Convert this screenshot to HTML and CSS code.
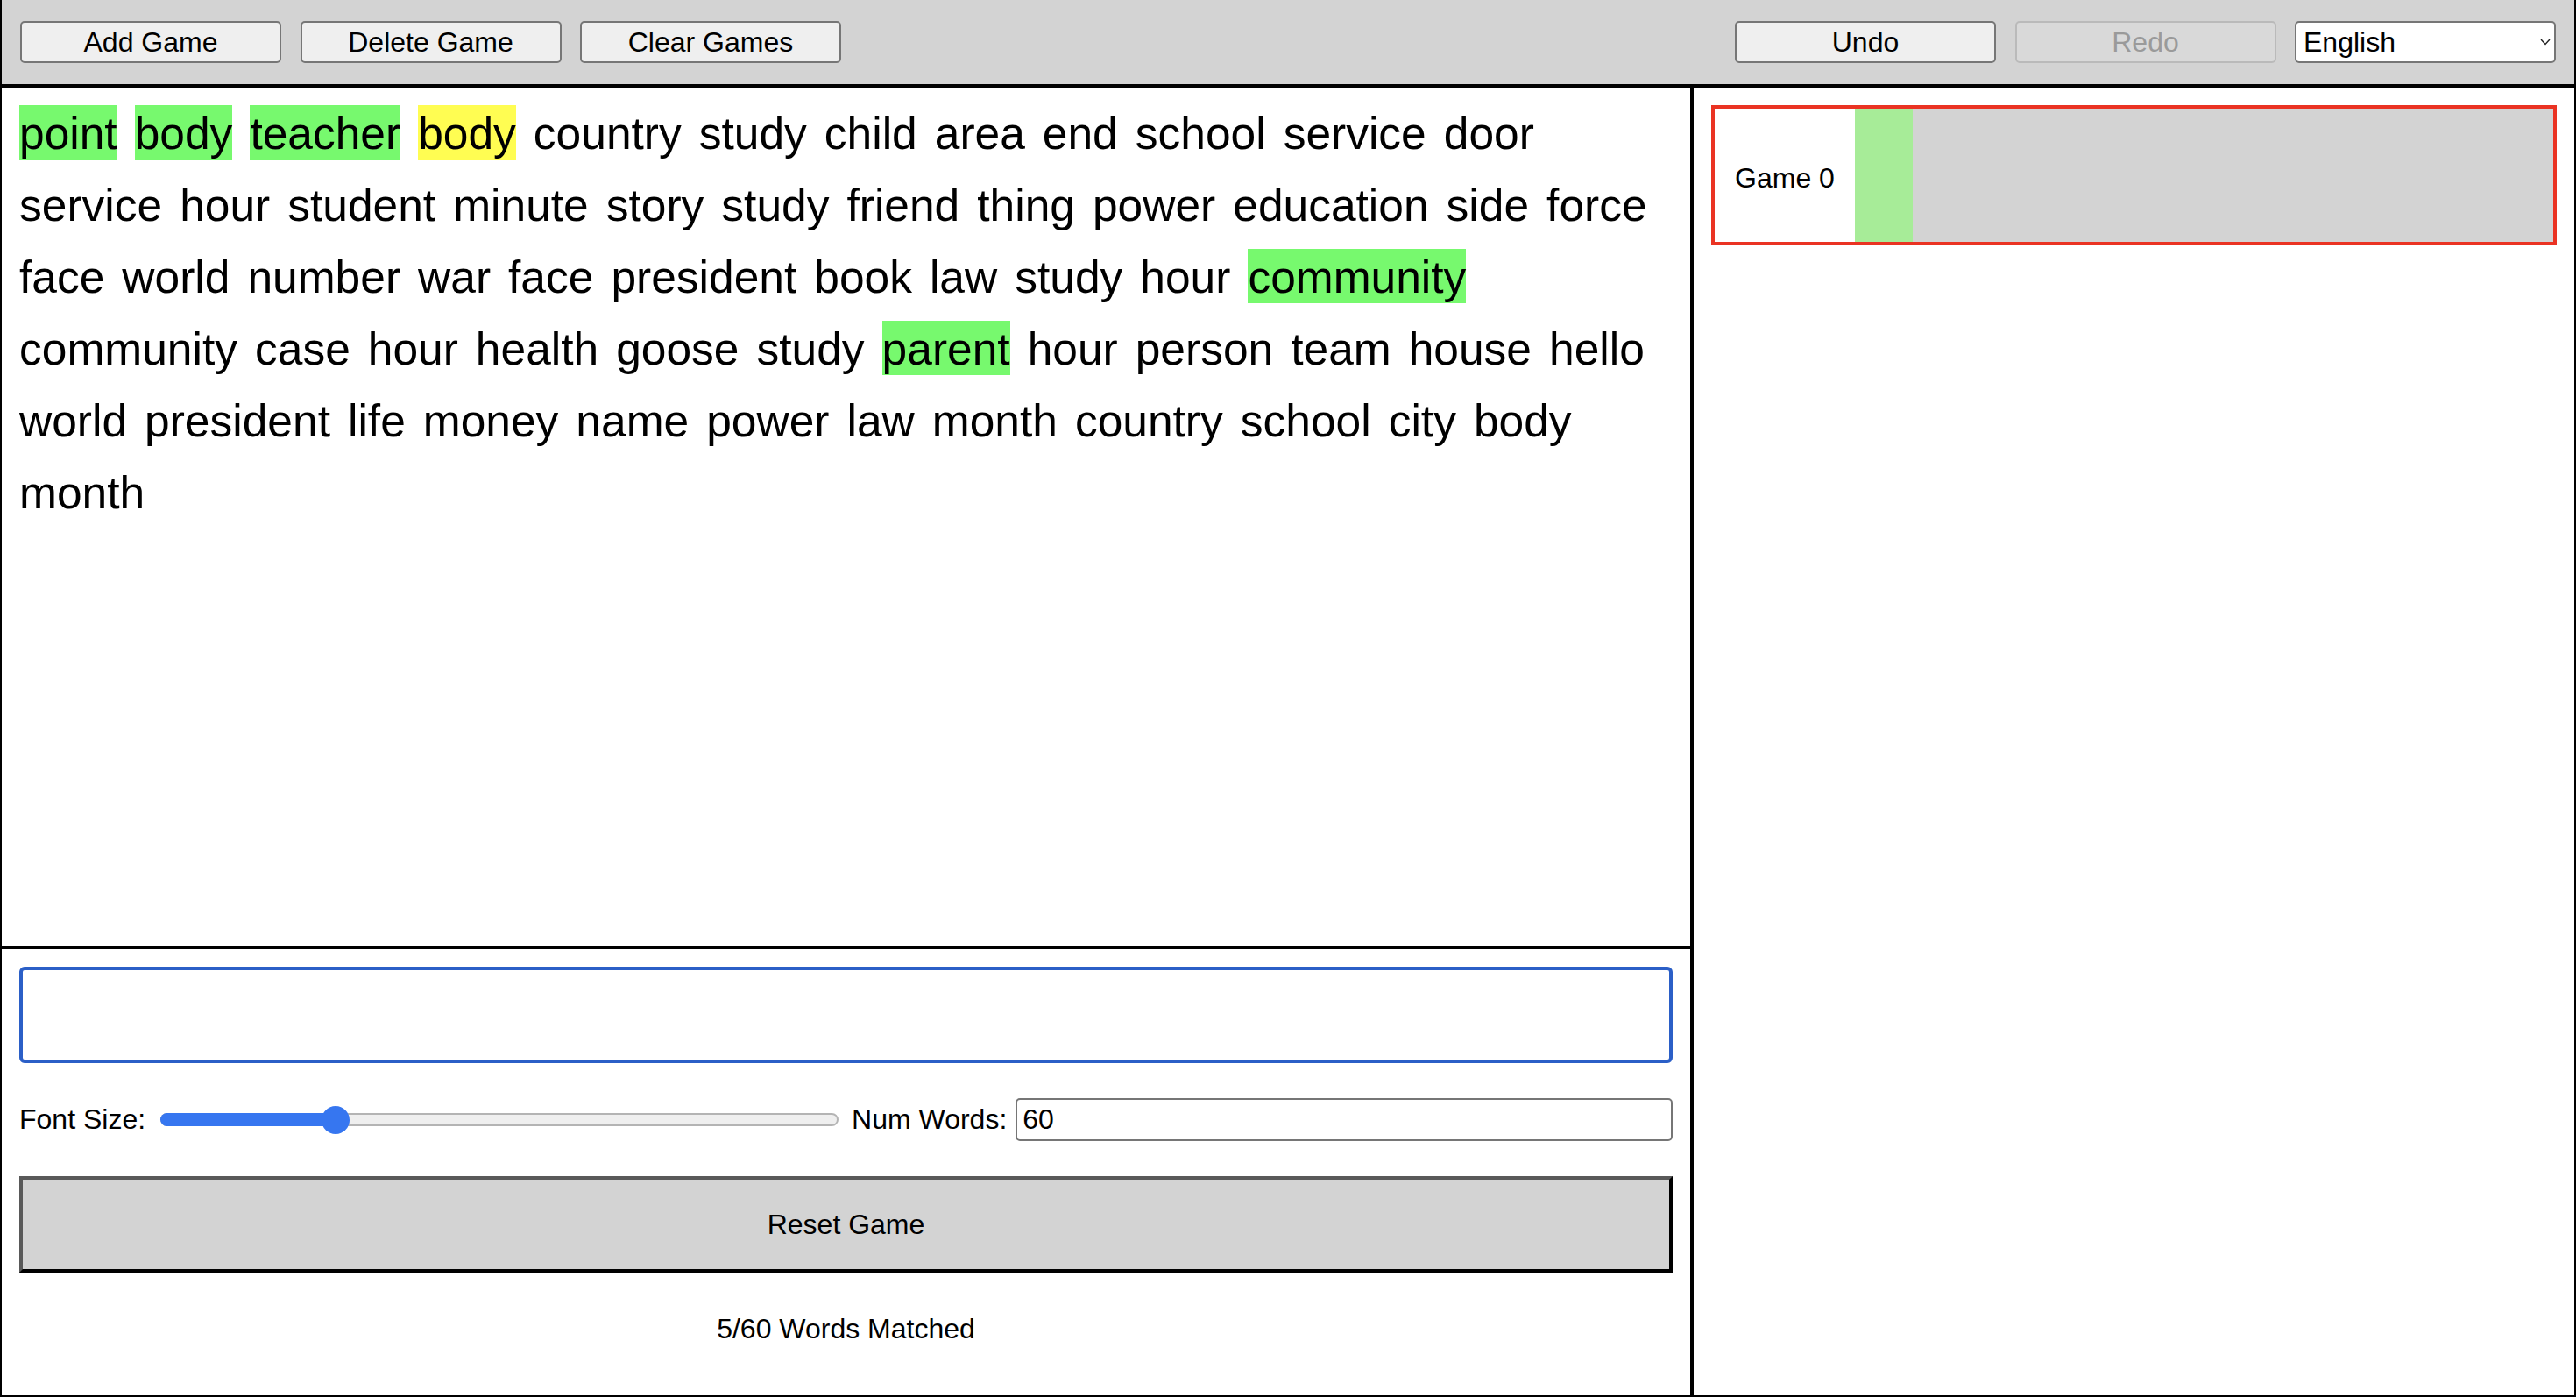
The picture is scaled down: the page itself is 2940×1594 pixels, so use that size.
FILE: index.html
```html
<!DOCTYPE html>
<html lang="en">
<head>
<meta charset="utf-8">
<title>Typing Game</title>
<link rel="stylesheet" href="styles.css">
</head>
<body>
<div class="app">
  <header class="toolbar">
    <div class="toolbar-group">
      <button class="btn">Add Game</button>
      <button class="btn">Delete Game</button>
      <button class="btn">Clear Games</button>
    </div>
    <div class="toolbar-group">
      <button class="btn">Undo</button>
      <button class="btn" disabled>Redo</button>
      <div class="lang">
        <select class="lang-select">
          <option>English</option>
        </select>
        <svg class="lang-caret" width="12" height="8" viewBox="0 0 12 8"><polyline points="1,1 6,6.5 11,1" fill="none" stroke="#222" stroke-width="1.4"/></svg>
      </div>
    </div>
  </header>
  <main class="main">
    <section class="game-panel">
      <div class="words">
        <span class="word matched">point</span>
        <span class="word matched">body</span>
        <span class="word matched">teacher</span>
        <span class="word current">body</span>
        <span class="word">country</span>
        <span class="word">study</span>
        <span class="word">child</span>
        <span class="word">area</span>
        <span class="word">end</span>
        <span class="word">school</span>
        <span class="word">service</span>
        <span class="word">door</span>
        <span class="word">service</span>
        <span class="word">hour</span>
        <span class="word">student</span>
        <span class="word">minute</span>
        <span class="word">story</span>
        <span class="word">study</span>
        <span class="word">friend</span>
        <span class="word">thing</span>
        <span class="word">power</span>
        <span class="word">education</span>
        <span class="word">side</span>
        <span class="word">force</span>
        <span class="word">face</span>
        <span class="word">world</span>
        <span class="word">number</span>
        <span class="word">war</span>
        <span class="word">face</span>
        <span class="word">president</span>
        <span class="word">book</span>
        <span class="word">law</span>
        <span class="word">study</span>
        <span class="word">hour</span>
        <span class="word matched">community</span>
        <span class="word">community</span>
        <span class="word">case</span>
        <span class="word">hour</span>
        <span class="word">health</span>
        <span class="word">goose</span>
        <span class="word">study</span>
        <span class="word matched">parent</span>
        <span class="word">hour</span>
        <span class="word">person</span>
        <span class="word">team</span>
        <span class="word">house</span>
        <span class="word">hello</span>
        <span class="word">world</span>
        <span class="word">president</span>
        <span class="word">life</span>
        <span class="word">money</span>
        <span class="word">name</span>
        <span class="word">power</span>
        <span class="word">law</span>
        <span class="word">month</span>
        <span class="word">country</span>
        <span class="word">school</span>
        <span class="word">city</span>
        <span class="word">body</span>
        <span class="word">month</span>
      </div>
      <div class="controls">
        <input class="typing" type="text" value="">
        <div class="settings">
          <label class="settings-label">Font Size:</label>
          <div class="range">
            <div class="range-fill"></div>
            <div class="range-thumb"></div>
          </div>
          <label class="settings-label settings-label-num">Num Words:</label>
          <input class="num-input" type="text" value="60">
        </div>
        <button class="reset">Reset Game</button>
        <p class="status">5/60 Words Matched</p>
      </div>
    </section>
    <aside class="games">
      <div class="game-card">
        <div class="game-name">Game 0</div>
        <div class="game-progress">
          <div class="game-progress-fill" style="width: 8.333%"></div>
        </div>
      </div>
    </aside>
  </main>
</div>
</body>
</html>
```

FILE: styles.css
```css
html, body {
  margin: 0;
  padding: 0;
  background: #ffffff;
}

body {
  font-family: "Liberation Sans", Arial, Helvetica, sans-serif;
  color: #000;
}

.app {
  width: 2940px;
  height: 1594px;
  box-sizing: border-box;
  border-left: 2px solid #000;
  border-right: 2px solid #000;
  border-bottom: 2px solid #000;
  display: flex;
  flex-direction: column;
}

.toolbar {
  height: 100px;
  flex: 0 0 100px;
  box-sizing: border-box;
  background: #d3d3d3;
  border-bottom: 4px solid #000;
  padding: 0 21px;
  display: flex;
  align-items: center;
  justify-content: space-between;
}

.toolbar-group {
  display: flex;
  align-items: center;
  gap: 21.5px;
}

.btn {
  width: 298px;
  height: 48px;
  box-sizing: border-box;
  background: #efefef;
  border: 2px solid #767676;
  border-radius: 5px;
  font-family: "Liberation Sans", Arial, sans-serif;
  font-size: 32px;
  color: #000;
  padding: 0;
}

.btn:disabled {
  background: #d9d9d9;
  border-color: #bababa;
  color: #9a9a9a;
}

.lang {
  position: relative;
  width: 298px;
  height: 48px;
}

.lang-select {
  -webkit-appearance: none;
  appearance: none;
  width: 100%;
  height: 100%;
  box-sizing: border-box;
  background: #fff;
  border: 2px solid #767676;
  border-radius: 5px;
  font-family: "Liberation Sans", Arial, sans-serif;
  font-size: 32px;
  color: #000;
  padding: 0 0 0 8px;
}

.lang-caret {
  position: absolute;
  right: 6px;
  top: 20px;
  pointer-events: none;
}

.main {
  flex: 1;
  display: flex;
  min-height: 0;
}

.game-panel {
  width: 1931px;
  flex: 0 0 1931px;
  box-sizing: border-box;
  border-right: 4px solid #000;
  display: flex;
  flex-direction: column;
}

.words {
  flex: 1;
  box-sizing: border-box;
  border-bottom: 4px solid #000;
  padding: 20px;
  display: flex;
  flex-wrap: wrap;
  align-content: flex-start;
  gap: 20px;
}

.word {
  font-size: 51.5px;
  line-height: 58px;
  padding-top: 3px;
  padding-bottom: 1px;
  white-space: nowrap;
}

.word.matched {
  background: #77f96e;
}

.word.current {
  background: #fffd52;
}

.controls {
  flex: 0 0 509px;
  box-sizing: border-box;
  padding: 20px 20px 0 20px;
  display: flex;
  flex-direction: column;
}

.typing {
  height: 110px;
  box-sizing: border-box;
  border: 4px solid #2b5fc7;
  border-radius: 6px;
  outline: none;
  font-family: "Liberation Sans", Arial, sans-serif;
  font-size: 32px;
  padding: 0 10px;
}

.settings {
  margin-top: 40px;
  height: 49px;
  display: flex;
  align-items: center;
}

.settings-label {
  font-size: 32px;
  line-height: 37px;
}

.settings-label-num {
  margin-left: 15px;
}

.range {
  position: relative;
  width: 774px;
  height: 15px;
  margin-left: 17px;
  box-sizing: border-box;
  background: #efefef;
  border: 2px solid #b4b4b4;
  border-radius: 8px;
}

.range-fill {
  position: absolute;
  left: -2px;
  top: -2px;
  bottom: -2px;
  width: 210px;
  background: #3676f0;
  border-radius: 8px;
}

.range-thumb {
  position: absolute;
  left: 182px;
  top: 50%;
  width: 32px;
  height: 32px;
  margin-top: -16px;
  border-radius: 50%;
  background: #3676f0;
}

.num-input {
  flex: 1;
  margin-left: 10px;
  height: 49px;
  box-sizing: border-box;
  border: 2px solid #767676;
  border-radius: 5px;
  font-family: "Liberation Sans", Arial, sans-serif;
  font-size: 32px;
  padding: 0 6px;
  color: #000;
}

.reset {
  margin-top: 40px;
  height: 110px;
  box-sizing: border-box;
  background: #d3d3d3;
  border-style: solid;
  border-width: 4px;
  border-color: #595959 #000 #000 #595959;
  font-family: "Liberation Sans", Arial, sans-serif;
  font-size: 32px;
  color: #000;
  padding: 0;
}

.status {
  margin: 46px 0 0 0;
  text-align: center;
  font-size: 32px;
  line-height: 37px;
}

.games {
  flex: 1;
  padding: 20px;
}

.game-card {
  height: 160px;
  box-sizing: border-box;
  border: 4px solid #ea3323;
  display: flex;
}

.game-name {
  width: 160px;
  flex: 0 0 160px;
  display: flex;
  align-items: center;
  justify-content: center;
  font-size: 32px;
  padding-top: 6px;
  box-sizing: border-box;
}

.game-progress {
  flex: 1;
  background: #d3d3d3;
}

.game-progress-fill {
  height: 100%;
  background: #a7ec98;
}
```
